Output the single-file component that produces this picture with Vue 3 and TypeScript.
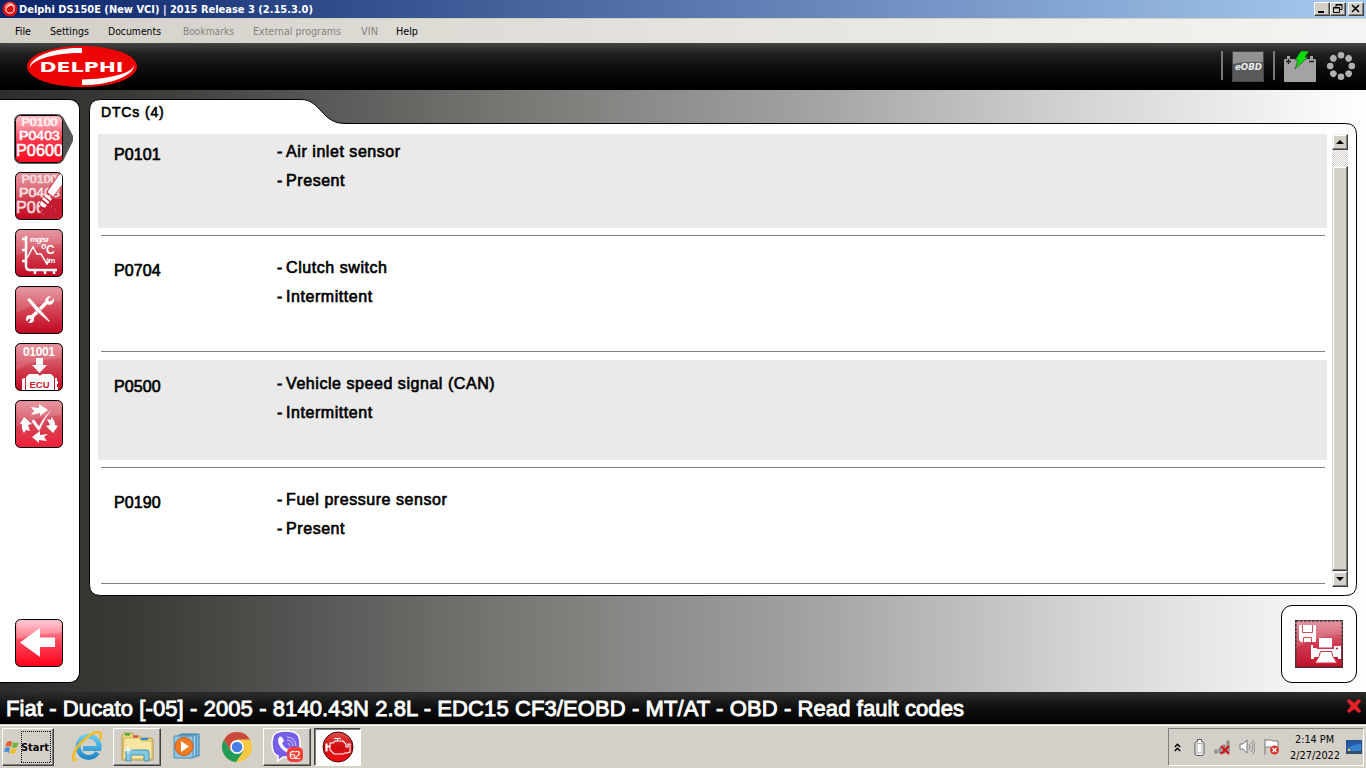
<script setup lang="ts">
interface MenuItem { label: string; disabled: boolean; width: number; gap: number }
interface Fault { code: string; name: string; status: string }

const menu: MenuItem[] = [
  { label: 'File', disabled: false, width: 16, gap: 19 },
  { label: 'Settings', disabled: false, width: 39, gap: 19 },
  { label: 'Documents', disabled: false, width: 53, gap: 22 },
  { label: 'Bookmarks', disabled: true, width: 51, gap: 19 },
  { label: 'External programs', disabled: true, width: 88, gap: 20 },
  { label: 'VIN', disabled: true, width: 17, gap: 18 },
  { label: 'Help', disabled: false, width: 22, gap: 0 },
]
const faults: Fault[] = [
  { code: 'P0101', name: 'Air inlet sensor', status: 'Present' },
  { code: 'P0704', name: 'Clutch switch', status: 'Intermittent' },
  { code: 'P0500', name: 'Vehicle speed signal (CAN)', status: 'Intermittent' },
  { code: 'P0190', name: 'Fuel pressure sensor', status: 'Present' },
]
const tools: string[] = ['codes', 'erase', 'graph', 'repair', 'ecu', 'cycle']
const dots: number[] = [0, 45, 90, 135, 180, 225, 270, 315]
</script>

<template>
  <div class="screen">
    <header class="titlebar">
      <svg class="app-icon" width="16" height="16" viewBox="0 0 16 16">
        <circle cx="8" cy="8" r="7.5" fill="#d9100f" />
        <path d="M2 6Q8-3 14 6Q8 3 2 6Z" fill="#f58a80" />
        <path d="M4 6h2l1-2h3l2 2v4l-2 2H6L4 10z" fill="none" stroke="#fff" stroke-width="1" />
      </svg>
      <svg class="title-text" width="296" height="18">
        <text x="0" y="13" textLength="294" lengthAdjust="spacingAndGlyphs">Delphi DS150E (New VCI) | 2015 Release 3 (2.15.3.0)</text>
      </svg>
      <div class="window-buttons">
        <span class="wbtn"><svg width="14" height="12"><path d="M3 8h6v2H3z" /></svg></span>
        <span class="wbtn"><svg width="14" height="12"><path d="M5 4V1.5h6v5H9M5 2h6M2.5 5v4.5h6v-5h-6zM2 5h7" fill="none" stroke="#000" /></svg></span>
        <span class="wbtn close"><svg width="14" height="12"><path d="M3 2l7 7M10 2L3 9" fill="none" stroke="#000" stroke-width="1.6" /></svg></span>
      </div>
    </header>

    <nav class="menubar">
      <svg v-for="m in menu" :key="m.label" class="menu-item" :class="{ disabled: m.disabled }" :width="m.width" height="24" :style="{ marginRight: m.gap + 'px' }">
        <text x="0" y="16" :textLength="m.width" lengthAdjust="spacingAndGlyphs">{{ m.label }}</text>
      </svg>
    </nav>

    <div class="brandbar">
      <svg class="logo" width="112" height="43" viewBox="0 0 112 43">
        <ellipse cx="56" cy="21.5" rx="55" ry="20.7" fill="#ed0505" />
        <path d="M56 3C29 2 3 12 4 23C5 16 24 8 56 8Z" fill="#fff" />
        <path d="M56 40C83 41 109 30 108 20C107 28 84 34 56 34.5Z" fill="#fff" />
        <text x="13.500" y="26.500" textLength="84" lengthAdjust="spacingAndGlyphs">DELPHI</text>
      </svg>
      <div class="status-icons">
        <i class="sep"></i>
        <svg class="eobd" width="32" height="31" viewBox="0 0 32 31">
          <rect x=".5" y=".5" width="31" height="30" fill="#5a5a5a" stroke="#454545" />
          <path d="M1 1h30v10Q13 10 1 13z" fill="#929292" />
          <text x="3" y="19" textLength="27" lengthAdjust="spacingAndGlyphs">eOBD</text>
        </svg>
        <i class="sep second"></i>
        <svg class="battery" width="32" height="31" viewBox="0 0 32 31">
          <path d="M0 9q0-1 1-1h2V5h3v3h20V5h3v3h2q1 0 1 1v21q0 1-1 1H1q-1 0-1-1z" fill="#a3a3a3" />
          <path d="M2 10.500h5M4.500 8v5M25 10.500h5" stroke="#222" stroke-width="1.4" />
          <path d="M17 0h8l-4 6h3L11 18l3-9h-3z" fill="#0bdc0b" stroke="#245524" stroke-width=".7" />
        </svg>
        <svg class="spinner" width="30" height="30" viewBox="0 0 30 30">
          <circle v-for="d in dots" :key="d" cx="15" cy="4.200" r="3.300" fill="#b0b0b0" :transform="`rotate(${d} 15 15)`" />
        </svg>
      </div>
    </div>

    <main class="workspace">
      <aside class="sidebar">
        <svg v-for="(t, i) in tools" :key="t" class="tool" width="60" height="50" viewBox="-1 -1 60 50">
          <defs>
            <linearGradient :id="'g' + i" x1="0" y1="0" x2="0" y2="1">
              <stop offset="0" :stop-color="i === 0 ? '#ffbac3' : '#e28a95'" />
              <stop offset=".48" :stop-color="i === 0 ? '#f93c50' : '#d34656'" />
              <stop offset="1" :stop-color="i === 0 ? '#ff0a20' : i === 5 ? '#ee2038' : '#c20620'" />
            </linearGradient>
            <clipPath :id="'c' + i"><rect x="1" y="1" width="46" height="46" rx="4" /></clipPath>
          </defs>
          <path v-if="i === 0" d="M48 2L58 21v5L48 46z" fill="#555" />
          <rect v-if="i === 0" x="-.5" y="-.5" width="49" height="49" rx="6" fill="none" stroke="#555" />
          <rect x=".5" y=".5" width="47" height="47" rx="5" :fill="`url(#g${i})`" stroke="#000" />
          <path d="M1.500 5q0-3.500 3.500-3.500h38q3.500 0 3.500 3.500v10Q20 16 1.500 27z" fill="#fff" opacity=".13" />
          <g :clip-path="`url(#c${i})`">
            <g v-if="i < 2" class="codes" :class="{ faded: i === 1 }">
              <text x="6.500" y="11" font-size="10" textLength="36" lengthAdjust="spacingAndGlyphs" opacity=".85">P0100</text>
              <text x="4" y="24.500" font-size="12.500" textLength="41" lengthAdjust="spacingAndGlyphs">P0403</text>
              <text x="1" y="41" font-size="17" textLength="47" lengthAdjust="spacingAndGlyphs">P0600</text>
            </g>
            <g v-if="i === 1">
              <path d="M25 27h23v21H26z" fill="#c31a30" />
              <path d="M43 3L47 0H49V11L38 26 31 20z" fill="#cd3d50" />
              <path d="M44 3L47 1H49V10L38 24.500 32.500 20z" fill="#fff" />
              <path d="M31 22l6 5-1.500 2-6-5zM28.500 25l6 5-1.500 2-6-5zM26 28.500l6 5-2 2q-3 0-5-3z" fill="#fff" />
              <path d="M23 36l2-1M22 40l1 1M26 39l2-1M28 43l1-1M36 34l1 1M40 38h1" stroke="#e0808d" stroke-width=".8" />
            </g>
            <g v-if="i === 2" fill="none" stroke="#fff">
              <path d="M11 7v30q0 4 4 4h27M7 10h4M7 21h4M7 32h4M20 41v4M30 41v4M39 41v4" stroke-width="2.500" />
              <path d="M12 29l6-11 4 7h4l6 10 3-5" stroke-width="1.500" />
              <text class="tiny" x="15" y="12.500" textLength="19">mg/sr</text>
              <text class="deg" x="26" y="20" font-size="9">o</text>
              <text class="deg" x="31" y="25" font-size="12">C</text>
              <text class="tiny" x="31" y="34">/m</text>
            </g>
            <g v-if="i === 3">
              <path d="M16 32L31 17" stroke="#fff" stroke-width="3.500" />
              <path d="M36 10l-3 3.500 1.200 2 3-1 1-3q2 5-2 7-4 1-6-2-1-6 5.800-6.500z" fill="#fff" />
              <circle cx="15" cy="33" r="4" fill="#fff" /><path d="M15 33l-3 4" stroke="#cb2639" stroke-width="2" />
              <path d="M12 14q0-3 3-2l9 10 11 13-1 1-13-11z" fill="#fff" stroke="#bd4553" stroke-width=".5" />
            </g>
            <g v-if="i === 4">
              <text class="binary" x="8" y="13" textLength="32">01001</text>
              <path d="M21 15h7v7h4l-7.500 8-7.500-8h4z" fill="#fff" />
              <path d="M7 48V37q0-2 3-2v13zM11 48V34l3-3h9q2 3 4 0h9l3 3v14zM40 48V35h2v3h1v3h-1v3h1v4z" fill="#fff" />
              <text class="ecu" x="14.500" y="44.500" textLength="20" lengthAdjust="spacingAndGlyphs">ECU</text>
            </g>
            <g v-if="i === 5" fill="#fff">
              <path d="M16 7l8 1V4l9 6-8 6v-3l-9 2 3-4z" />
              <path d="M9 17l8 7-4 1 2 6-4-1-2 3q-3-4-2-9H5z" />
              <path d="M36 17q4 3 4 8l3 1-5 7-7-7 4-1-3-6 4 1z" />
              <path d="M17 37l8-6v4l8-1-4 3 3 4-8-1v3z" />
              <path d="M16 21l3-2 5 7q5-11 15-18Q30 17 25 30q-2 2-3-1z" stroke="#e26071" stroke-width=".7" />
            </g>
          </g>
        </svg>
        <svg class="tool back" width="60" height="50" viewBox="-1 -1 60 50">
          <defs><linearGradient id="gb" x1="0" y1="0" x2="0" y2="1"><stop offset="0" stop-color="#ffc2ce" /><stop offset=".45" stop-color="#fc4a60" /><stop offset="1" stop-color="#ff0018" /></linearGradient></defs>
          <rect x=".5" y=".5" width="47" height="47" rx="5" fill="url(#gb)" stroke="#000" />
          <path d="M2 5q0-3 3-3h38q3 0 3 3v9Q20 15 2 20z" fill="#fff" opacity=".2" />
          <path d="M5 23.500L25 9v9.500h15V28H25v10z" fill="#fff" />
        </svg>
      </aside>

      <section class="content">
        <div class="panel">
          <svg class="panel-shape" width="1268" height="498" viewBox="0 0 1268 498">
            <path d="M.5 11.500Q.500.500 11.500.500H212C232 .5 232 24.500 256 24.500H1256.500Q1267.500 24.500 1267.500 35.500V485.500Q1267.500 496.500 1256.500 496.500H11.500Q.5 496.500.5 485.500Z" fill="#fff" stroke="#000" />
          </svg>
          <h1>DTCs (4)</h1>
          <div class="list-area">
            <ul class="faults">
              <li v-for="f in faults" :key="f.code">
                <div class="record">
                  <span class="code">{{ f.code }}</span>
                  <div class="detail"><p><span class="dash">- </span>{{ f.name }}</p><p><span class="dash">- </span>{{ f.status }}</p></div>
                </div>
                <hr />
              </li>
            </ul>
            <div class="scrollbar">
              <span class="sbtn"><svg width="12" height="12"><path d="M2 8l4-4 4 4z" /></svg></span>
              <span class="gap"></span>
              <span class="thumb"></span>
              <span class="sbtn"><svg width="12" height="12"><path d="M2 4l4 4 4-4z" /></svg></span>
            </div>
          </div>
        </div>
        <button class="save" type="button">
          <svg width="48" height="48" viewBox="0 0 48 48">
            <defs><linearGradient id="gs" x1="0" y1="0" x2="0" y2="1"><stop offset="0" stop-color="#e18a98" /><stop offset=".5" stop-color="#cf3b50" /><stop offset="1" stop-color="#c00d2a" /></linearGradient></defs>
            <rect width="48" height="48" fill="url(#gs)" />
            <path d="M1 1h46v13Q20 16 1 28z" fill="#fff" opacity=".12" />
            <path d="M4 5h17v17H6l-2-2z" fill="#fff" />
            <path d="M7.500 5v7.500h10V5M8.500 22v-4.500h8V22" fill="none" stroke="#d04f61" />
            <path d="M24 18h13v9.500H24z" fill="#fff" />
            <path d="M16 25h2v3h4v1h17v-3h7v13h-3v-2H19v2h-3z" fill="#fff" />
            <path d="M25.500 31.500h11l1.500 5 4 6.500H20l4-6.500z" fill="#fff" stroke="#cc2f46" />
            <circle cx="42" cy="28.500" r="1" fill="#b41930" />
            <rect x=".75" y=".75" width="46.500" height="46.500" fill="none" stroke="#333" stroke-width="1.500" stroke-dasharray="3 1" />
          </svg>
        </button>
      </section>
    </main>

    <div class="vehicle">
      <svg width="970" height="31"><text x="6" y="23" textLength="958">Fiat - Ducato [-05] - 2005 - 8140.43N 2.8L - EDC15 CF3/EOBD - MT/AT - OBD - Read fault codes</text></svg>
      <svg class="cross" width="16" height="16" viewBox="0 0 16 16"><path d="M1 3l2-2 5 4 5-4 2 2-4 5 4 5-2 2-5-4-5 4-2-2 4-5z" fill="#e62229" stroke="#9c171d" stroke-width=".6" /></svg>
    </div>

    <footer class="taskbar">
      <div class="start task-button">
        <svg width="17" height="17" viewBox="0 0 17 17">
          <path d="M3 3q3-2 5 0L7 8Q4 6 1 8z" fill="#e85d2c" /><path d="M9 3q3 2 6 0l-2 5q-3 2-5 0z" fill="#71b63b" />
          <path d="M1 9q3-2 5 0l-1 5Q2 12 0 13z" fill="#4d8fdc" /><path d="M7 9q3 2 6 0l-2 5q-3 2-5 0z" fill="#f4bd2c" />
        </svg>
        <svg class="start-label" width="30" height="32"><path d="M0 .5h30M0 31.500h30M.5 0v32M29.500 0v32" stroke="#000" stroke-dasharray="1 1" /><text x="0" y="20" textLength="28" lengthAdjust="spacingAndGlyphs">Start</text></svg>
      </div>
      <div class="task ie">
        <svg width="32" height="32" viewBox="0 0 32 32">
          <defs><linearGradient id="ie" x1="0" y1="0" x2="0" y2="1"><stop offset="0" stop-color="#61caf5" /><stop offset="1" stop-color="#228bc9" /></linearGradient></defs>
          <path d="M25.500 21.500A10.500 10.500 0 1 1 27 17.500H11" fill="none" stroke="url(#ie)" stroke-width="5" />
          <path d="M5 28C-2 33 0 19 13 8S31 0 28 9" fill="none" stroke="#f5bd24" stroke-width="2.600" />
        </svg>
      </div>
      <div class="task task-button folder">
        <svg width="34" height="32" viewBox="0 0 34 32">
          <path d="M2 5l2-3h8l2 3h6l1 2h10l2 2v20H2z" fill="#eed37a" stroke="#b39949" />
          <path d="M4 7h15l2 3h11v18H3z" fill="#f8e5a0" stroke="#cfb766" />
          <path d="M5 3.500h5" stroke="#26ac35" stroke-width="2" /><path d="M13 5.500h5" stroke="#d64b3c" stroke-width="2" /><path d="M21 8h7" stroke="#1e90d5" stroke-width="2" />
          <path d="M6 30v-9q0-2 2-2h19q2 0 2 2v9h-5v-6H11v6z" fill="#85c7e0" stroke="#4692b4" />
          <path d="M8 14l1 4 4 1-4 1-1 4-1-4-4-1 4-1z" fill="#e7fbff" />
        </svg>
      </div>
      <div class="task player">
        <svg width="32" height="30" viewBox="0 0 32 30">
          <path d="M8 2h18v22H8z" fill="#84bddf" stroke="#327da8" /><path d="M5 3h18v22H5z" fill="#9fd0e9" stroke="#3782ab" /><path d="M1 4h19v22H1z" fill="#8dc7e5" stroke="#4a8fb5" />
          <circle cx="11" cy="14.500" r="9" fill="#f17a22" stroke="#d15b12" /><path d="M8 9l8 5.500L8 20z" fill="#fff" />
        </svg>
      </div>
      <div class="task chrome">
        <svg width="30" height="30" viewBox="0 0 30 30">
          <circle cx="15" cy="15" r="15" fill="#f7c843" /><path d="M2 7.500A15 15 0 0 1 28 7.500H15L8.500 19z" fill="#c9493c" />
          <path d="M2 7.500A15 15 0 0 0 14 30L21.500 19 15 15 8.500 19z" fill="#249b57" /><circle cx="15" cy="15" r="6.900" fill="#fff" /><circle cx="15" cy="15" r="5.300" fill="#467fe6" />
        </svg>
      </div>
      <div class="task task-button viber">
        <svg width="34" height="34" viewBox="0 0 34 34">
          <path d="M16 1C5 1 2 4 2 14q0 10 6 12v5l5-4h4c11 0 13-4 13-13S27 1 16 1z" fill="#765ee9" stroke="#fff" stroke-width="1.500" />
          <path d="M9 7q3-2 5 4l-2 2q2 5 6 6l2-2 5 4q-2 4-5 3Q8 19 8 10z" fill="#fff" />
          <path d="M17 10q5 0 6 6M17 7q8 0 9 9M18 13l2 3" fill="none" stroke="#d7d2ff" />
          <rect x="17" y="17" width="16" height="15" rx="5" fill="#f64035" /><text class="badge" x="19" y="29" textLength="12">62</text>
        </svg>
      </div>
      <div class="task active delphi">
        <svg width="32" height="32" viewBox="0 0 32 32">
          <defs><linearGradient id="en" x1="0" y1="0" x2="0" y2="1"><stop offset="0" stop-color="#e34d4d" /><stop offset=".5" stop-color="#d00d12" /><stop offset="1" stop-color="#f20b10" /></linearGradient></defs>
          <circle cx="16" cy="16" r="15" fill="url(#en)" stroke="#430d0d" />
          <path d="M8 12h3l2-2h8l3 3v3h2v-3h2v8l-3 1h-2l-2 1H12l-4-4v-3H5v4H4v-7h1v2h3zM12 7.500h7M15.500 7.500V10" fill="none" stroke="#fff" stroke-width="1.100" />
        </svg>
      </div>
      <div class="tray">
        <svg class="chev" width="7" height="9" viewBox="0 0 7 9"><path d="M.8 4L3.500 1.300 6.200 4M.8 8L3.500 5.300 6.200 8" fill="none" stroke="#000" stroke-width="1.400" /></svg>
        <svg class="batt" width="11" height="17" viewBox="0 0 11 17"><path d="M3.500 2.500v-2h4v2q2.500 0 2.500 2V14q0 2.500-2 2.500H3q-2 0-2-2.500V4.500q0-2 2.500-2z" fill="#fff" stroke="#555" /><rect x="3" y="4.500" width="5" height="9.500" fill="#f8f8f8" stroke="#aaa" /></svg>
        <svg class="signal" width="18" height="17" viewBox="0 0 18 17"><path d="M1 14v-3h2v3zM5 14V9h2v5zM9 14V6h2v8zM13 14V2h2v12z" fill="#aaa" stroke="#777" stroke-width=".9" /><path d="M7 7l8 8M15 7l-8 8" stroke="#d3171b" stroke-width="2.200" /></svg>
        <svg class="sound" width="16" height="16" viewBox="0 0 16 16"><path d="M1 5h3l4-4v13l-4-4H1z" fill="#fff" stroke="#777" /><path d="M10 5q2 3 0 6M12 3q4 5 0 10M14 1q4 7 0 14" fill="none" stroke="#888" /></svg>
        <svg class="flag" width="17" height="18" viewBox="0 0 17 18"><path d="M2 1v16M2 2h6l2 1h5v7H9L8 9H2" fill="#fff" stroke="#777" /><circle cx="11.500" cy="12" r="4.500" fill="#d9362c" /><path d="M9.500 10l4 4M13.500 10l-4 4" stroke="#fff" stroke-width="1.300" /></svg>
        <svg class="clock" width="54" height="32"><text x="7" y="11.500" textLength="39" lengthAdjust="spacingAndGlyphs">2:14 PM</text><text x="2" y="27.500" textLength="50" lengthAdjust="spacingAndGlyphs">2/27/2022</text></svg>
        <svg class="desk" width="16" height="14" viewBox="0 0 16 14"><rect x=".5" y=".5" width="15" height="11" fill="#3681cd" stroke="#285481" /><path d="M1 1h14v3Q7 4 1 9z" fill="#255ba6" /><path d="M0 11h16v3H0z" fill="#344d6c" /><path d="M2 9h2v2H2z" fill="#f7cd36" /></svg>
      </div>
    </footer>
  </div>
</template>

<style>
body { margin: 0; overflow: hidden; }
</style>
<style scoped>
* { box-sizing: border-box; }
svg { display: block; flex: none; }
.screen { width: 1366px; height: 768px; display: flex; flex-direction: column; font-family: "Liberation Sans", Arial, sans-serif; overflow: hidden; }
.titlebar { height: 18px; display: flex; align-items: center; background: linear-gradient(90deg, #0a246a, #a6caf0); padding: 0 2px; flex: none; }
.title-text { margin-left: 1px; }
.title-text text { font: bold 11px "DejaVu Sans Condensed", "DejaVu Sans", sans-serif; fill: #fff; }
.window-buttons { margin-left: auto; display: flex; }
.wbtn { width: 16px; height: 14px; background: #d4d0c8; border: 1px solid; border-color: #fff #404040 #404040 #fff; box-shadow: inset -1px -1px #808080; }
.close { margin-left: 2px; }
.menubar { height: 25px; display: flex; border-top: 1px solid #d4d0c8; padding-left: 15px; background: linear-gradient(90deg, #d4d0c8, #f5f4f2); flex: none; }
.menu-item { overflow: visible; }
.menu-item text { font: 11px "DejaVu Sans Condensed", "DejaVu Sans", sans-serif; fill: #000; }
.menu-item.disabled text { fill: #85827d; }
.brandbar { height: 47px; display: flex; flex: none; background: linear-gradient(#454543, #20201f 22%, #0a0a0a 60%, #000); }
.logo { margin: 2px 0 0 26px; }
.logo text { font: bold 14px "DejaVu Sans", sans-serif; fill: #fff; }
.status-icons { margin-left: auto; display: flex; padding: 8px 10px 0 0; }
.sep { width: 2px; height: 29px; background: #777; }
.eobd { margin-left: 9px; }
.eobd text { font: italic bold 9px "DejaVu Sans", sans-serif; fill: #eee; }
.second { margin-left: 9px; }
.battery { margin-left: 9px; }
.spinner { margin: 0 0 0 10px; }
.workspace { height: 602px; flex: none; display: flex; background: linear-gradient(90deg, #2e2d2b 0, #3b3a37 10%, #5a5957 24%, #777673 37%, #a4a4a3 60%, #d6d6d6 80%, #fff 100%); }
.sidebar { width: 80px; height: 584px; margin-top: 9px; background: #fff; border: 1px solid #000; border-left: 0; border-radius: 0 10px 10px 0; padding: 14px 0 0 14px; display: flex; flex-direction: column; gap: 7px; }
.back { margin-top: auto; margin-bottom: 14px; }
.codes { font-family: "Liberation Sans", sans-serif; font-weight: normal; fill: #fff; stroke: #fff; stroke-width: .6; }
.codes.faded { opacity: .82; }
.tiny { font: bold 8px "Liberation Sans", sans-serif; fill: #fff; stroke: none; }
.deg { font-family: "Liberation Sans", sans-serif; font-weight: bold; fill: #fff; stroke: none; }
.binary { font: bold 12px "Liberation Sans", sans-serif; fill: #fff; }
.ecu { font: bold 9.5px "Liberation Sans", sans-serif; fill: #c8172e; }
.content { display: flex; flex-direction: column; padding: 9px 9px 0 9px; width: 1286px; }
.panel { position: relative; width: 1268px; height: 497px; }
.panel-shape { position: absolute; inset: 0; }
h1 { position: relative; margin: 0; padding: 5px 0 0 12px; height: 35px; font-size: 14px; line-height: 16px; font-weight: normal; -webkit-text-stroke: .6px #000; letter-spacing: .85px; }
.list-area { position: relative; display: flex; padding-left: 9px; height: 454px; }
.faults { list-style: none; margin: 0; padding: 0; width: 1229px; overflow: hidden; }
li { height: 116px; }
li:first-child { margin-top: -6px; }
.record { height: 100px; padding-left: 16px; display: flex; font-size: 16px; -webkit-text-stroke: .65px #000; }
li:nth-child(odd) .record { background: #eaeaea; }
.code { width: 163px; padding-top: 17px; line-height: 20px; letter-spacing: .1px; }
.detail { padding-top: 9px; letter-spacing: .55px; }
.dash { margin-right: -1.800px; white-space: pre; }
p { margin: 0; line-height: 29px; }
hr { margin: 7px 2px 8px 3px; border: 0; height: 1px; background: #7f7f7f; }
.scrollbar { width: 16px; height: 453px; margin-left: 5px; display: flex; flex-direction: column; }
.sbtn { width: 16px; height: 16px; padding: 1px; background: #d4d0c8; border: 1px solid; border-color: #eee #404040 #404040 #eee; box-shadow: inset -1px -1px #808080, inset 1px 1px #fff; }
.gap { height: 16px; background: repeating-conic-gradient(#d4d0c8 0 25%, #fff 0 50%) 0 0 / 2px 2px; }
.thumb { flex: 1; background: #d4d0c8; border: 1px solid; border-color: #eee #404040 #404040 #d4d0c8; box-shadow: inset -1px -1px #808080, inset 1px 1px #fff; }
.save { align-self: flex-end; margin-top: 9px; width: 76px; height: 78px; border: 1px solid #000; border-radius: 11px; padding: 0; background: #fff; display: flex; align-items: center; justify-content: center; }
.vehicle { height: 32px; flex: none; display: flex; background: linear-gradient(#2b2b29, #111 45%, #000); border-top: 1px solid #252b30; }
.vehicle text { font: 22px "Liberation Sans", Arial, sans-serif; fill: #fff; stroke: #fff; stroke-width: .9; }
.cross { margin: 5px 4px 0 auto; }
.taskbar { height: 44px; flex: none; background: #d4d0c8; border-top: 1px solid #d4d0c8; box-shadow: inset 0 1px #fff; display: flex; padding-top: 3px; padding-left: 2px; }
.task { height: 38px; display: flex; align-items: center; justify-content: center; }
.task-button { border: 1px solid; border-color: #fff #404040 #404040 #fff; box-shadow: inset -1px -1px #808080; }
.start { width: 52px; height: 38px; display: flex; align-items: center; padding-left: 1px; }
.start-label text { font: bold 11px "DejaVu Sans Condensed", "DejaVu Sans", sans-serif; }
.ie { width: 50px; margin-left: 9px; }
.folder { width: 48px; }
.player { width: 50px; margin-left: 1px; padding-left: 3px; }
.chrome { width: 50px; }
.viber { width: 48px; margin-left: 1px; }
.badge { font: 11px "DejaVu Sans", sans-serif; fill: #fff; }
.active { width: 47px; margin-left: 3px; background: #fff; border: 1px solid; border-color: #404040 #fff #fff #404040; box-shadow: inset 1px 1px #808080; }
.tray { margin-left: auto; margin-right: 2px; width: 196px; height: 38px; border: 1px solid; border-color: #808080 #fff #fff #808080; display: flex; align-items: center; padding-left: 5px; }
.batt { margin-left: 13px; }
.signal { margin-left: 9px; }
.sound { margin-left: 7px; }
.flag { margin-left: 8px; }
.clock { margin-left: 8px; }
.clock text { font: 11px "DejaVu Sans Condensed", "DejaVu Sans", sans-serif; }
.desk { margin-left: 4px; }
</style>
